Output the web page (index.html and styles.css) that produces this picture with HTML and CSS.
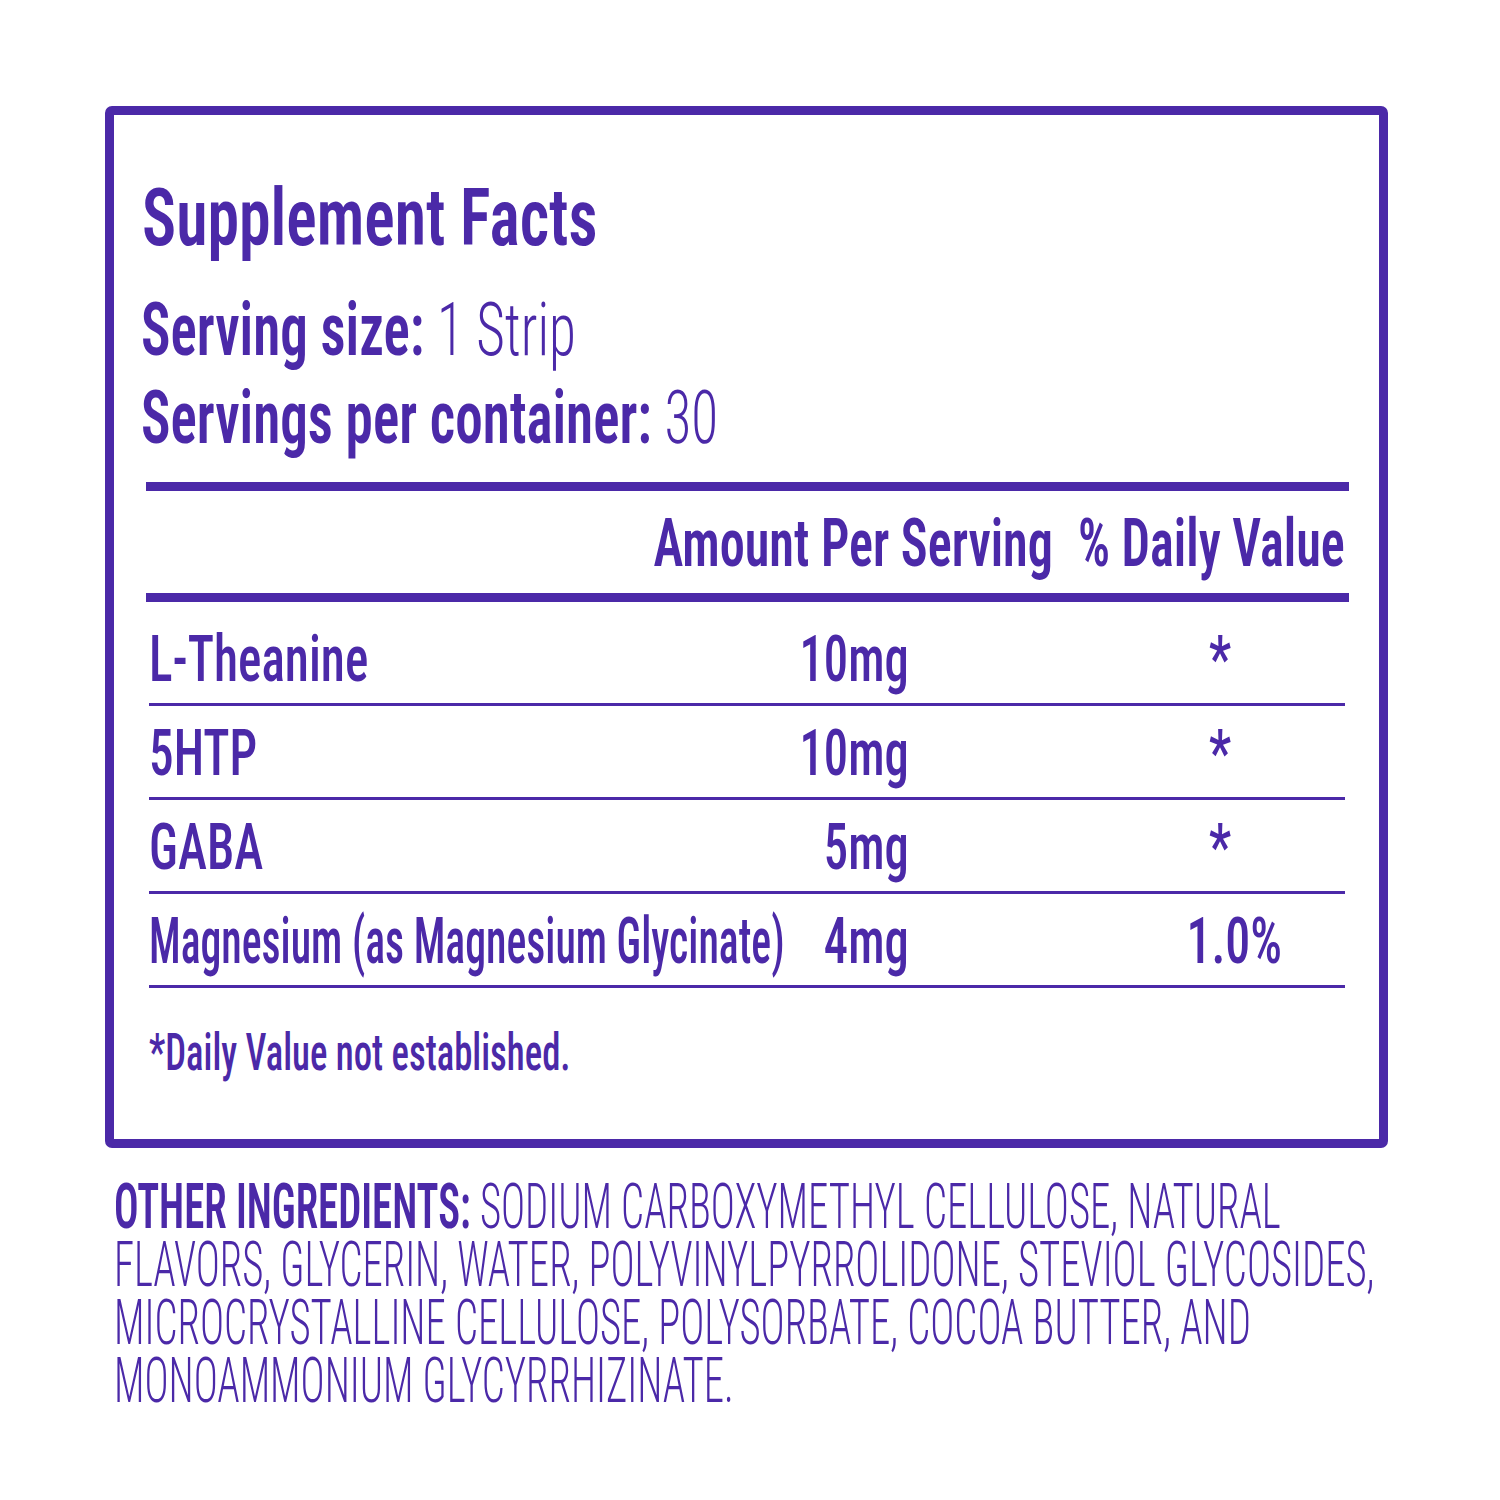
FILE: index.html
```html
<!DOCTYPE html>
<html lang="en">
<head>
<meta charset="utf-8">
<title>Supplement Facts</title>
<link rel="stylesheet" href="styles.css">
</head>
<body>
<section class="panel">
  <h1 class="title"><span class="sq">Supplement Facts</span></h1>
  <p class="serv first"><span class="sq"><b>Serving size:</b> <span class="lt">1 Strip</span></span></p>
  <p class="serv"><span class="sq"><b>Servings per container:</b> <span class="lt">30</span></span></p>
  <div class="table">
    <div class="head"><span class="sq r">Amount Per Serving<span class="dvh">% Daily Value</span></span></div>
    <div class="row top">
      <div class="name"><span class="sq">L-Theanine</span></div>
      <div class="amt"><span class="sq r">10mg</span></div>
      <div class="dv"><span class="sq c star">*</span></div>
    </div>
    <div class="row">
      <div class="name"><span class="sq">5HTP</span></div>
      <div class="amt"><span class="sq r">10mg</span></div>
      <div class="dv"><span class="sq c star">*</span></div>
    </div>
    <div class="row">
      <div class="name"><span class="sq">GABA</span></div>
      <div class="amt"><span class="sq r">5mg</span></div>
      <div class="dv"><span class="sq c star">*</span></div>
    </div>
    <div class="row">
      <div class="name long"><span class="sq">Magnesium (as Magnesium Glycinate)</span></div>
      <div class="amt"><span class="sq r">4mg</span></div>
      <div class="dv"><span class="sq c pct">1.0%</span></div>
    </div>
  </div>
  <p class="note"><span class="sq">*Daily Value not established.</span></p>
</section>
<p class="ingr"><span class="sq"><b>OTHER INGREDIENTS:</b> SODIUM CARBOXYMETHYL CELLULOSE, NATURAL<br>FLAVORS, GLYCERIN, WATER, POLYVINYLPYRROLIDONE, STEVIOL GLYCOSIDES,<br>MICROCRYSTALLINE CELLULOSE, POLYSORBATE, COCOA BUTTER, AND<br>MONOAMMONIUM GLYCYRRHIZINATE.</span></p>
</body>
</html>
```
FILE: styles.css
```css
html, body {
  margin: 0;
  padding: 0;
  overflow: hidden;
  background: #ffffff;
}
body {
  font-family: "Roboto Condensed", "Roboto", "Liberation Sans", sans-serif;
  color: #4b29a8;
}
.sq {
  display: inline-block;
  white-space: nowrap;
  transform: scaleX(var(--sx, 0.78));
  transform-origin: left center;
}
.sq.r { transform-origin: right center; }
.sq.c { transform-origin: center center; }
b { font-weight: 600; }
.lt { font-weight: 300; }

.panel {
  box-sizing: border-box;
  width: 1283px;
  height: 1042px;
  margin: 106px 0 0 105px;
  border: 9px solid #4b29a8;
  border-radius: 7px;
  padding: 63px 30px 0 32px;
}
.title {
  --sx: 0.798;
  margin: 0 0 0 -4px;
  font-size: 80px;
  line-height: 80px;
  font-weight: 600;
}
.serv {
  --sx: 0.745;
  margin: 0 0 0 -5px;
  font-size: 74px;
  line-height: 88px;
  font-weight: 400;
}
.serv.first { margin-top: 28px; }
.table {
  margin-top: 20px;
  border-top: 9px solid #4b29a8;
}
.head {
  --sx: 0.75;
  padding: 2px 4px 0 0;
  line-height: 100px;
  font-size: 67px;
  font-weight: 600;
  text-align: right;
  border-bottom: 9px solid #4b29a8;
}
.dvh { margin-left: 0.5em; }
.row {
  display: grid;
  grid-template-columns: 560px 200px 200px 1fr;
  margin: 0 4px 0 3px;
  padding-top: 4px;
  line-height: 87px;
  font-size: 64px;
  font-weight: 500;
  border-bottom: 3px solid #4b29a8;
}
.row.top { padding-top: 14px; }
.name { --sx: 0.77; grid-column: 1; }
.name.long { --sx: 0.653; }
.amt { --sx: 0.76; grid-column: 2; text-align: right; }
.dv { --sx: 0.78; grid-column: 4; text-align: center; }
.star { margin-right: 14px; }
.pct { margin-left: 14px; }
.note {
  --sx: 0.706;
  margin: 35px 0 0 3px;
  font-size: 52px;
  line-height: 60px;
  font-weight: 500;
}
.ingr {
  --sx: 0.647;
  width: 1270px;
  margin: 30px 0 0 114px;
  font-size: 63px;
  line-height: 58px;
  font-weight: 300;
}
.ingr .sq {
  width: 1270px;
}
```
